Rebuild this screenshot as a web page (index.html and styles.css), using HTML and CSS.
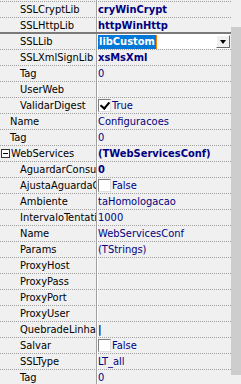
FILE: index.html
```html
<!DOCTYPE html>
<html lang="en">
<head>
    <meta charset="UTF-8">
    <title>Object Inspector</title>
    <link rel="stylesheet" href="styles.css">
</head>
<body>
    <div class="inspector">
        <div class="props">
            <div class="row"><div class="name lvl2">SSLCryptLib</div><div class="value bold">cryWinCrypt</div></div>
            <div class="row"><div class="name lvl2">SSLHttpLib</div><div class="value bold">httpWinHttp</div></div>
            <div class="row selected">
                <div class="name lvl2">SSLLib</div>
                <div class="value editor">
                    <span class="sel">libCustom</span><span class="caret"></span>
                    <span class="drop"><span class="arrow"></span></span>
                </div>
            </div>
            <div class="row"><div class="name lvl2">SSLXmlSignLib</div><div class="value bold">xsMsXml</div></div>
            <div class="row"><div class="name lvl2">Tag</div><div class="value">0</div></div>
            <div class="row"><div class="name lvl2">UserWeb</div><div class="value"></div></div>
            <div class="row"><div class="name lvl2">ValidarDigest</div><div class="value"><span class="check on"></span>True</div></div>
            <div class="row"><div class="name lvl1">Name</div><div class="value">Configuracoes</div></div>
            <div class="row"><div class="name lvl1">Tag</div><div class="value">0</div></div>
            <div class="row"><div class="name lvl1 group"><span class="toggle"></span>WebServices</div><div class="value bold">(TWebServicesConf)</div></div>
            <div class="row"><div class="name lvl2">AguardarConsultaRet</div><div class="value bold">0</div></div>
            <div class="row"><div class="name lvl2">AjustaAguardaConsultaRet</div><div class="value"><span class="check"></span>False</div></div>
            <div class="row"><div class="name lvl2">Ambiente</div><div class="value">taHomologacao</div></div>
            <div class="row"><div class="name lvl2">IntervaloTentativas</div><div class="value">1000</div></div>
            <div class="row"><div class="name lvl2">Name</div><div class="value">WebServicesConf</div></div>
            <div class="row"><div class="name lvl2">Params</div><div class="value">(TStrings)</div></div>
            <div class="row"><div class="name lvl2">ProxyHost</div><div class="value"></div></div>
            <div class="row"><div class="name lvl2">ProxyPass</div><div class="value"></div></div>
            <div class="row"><div class="name lvl2">ProxyPort</div><div class="value"></div></div>
            <div class="row"><div class="name lvl2">ProxyUser</div><div class="value"></div></div>
            <div class="row"><div class="name lvl2">QuebradeLinha</div><div class="value bold">|</div></div>
            <div class="row"><div class="name lvl2">Salvar</div><div class="value"><span class="check"></span>False</div></div>
            <div class="row"><div class="name lvl2">SSLType</div><div class="value">LT_all</div></div>
            <div class="row"><div class="name lvl2">Tag</div><div class="value">0</div></div>
        </div>
        <div class="scrollbar"><div class="thumb"></div></div>
    </div>
</body>
</html>
```

FILE: styles.css
```css
* {
    margin: 0;
    padding: 0;
    box-sizing: border-box;
}

body {
    font-family: "DejaVu Sans Condensed", "Liberation Sans", Arial, sans-serif;
    font-size: 11px;
    background-color: #f0f0f0;
    color: #000;
    overflow: hidden;
}

.inspector {
    display: flex;
    width: 241px;
    height: 384px;
}

.props {
    width: 231px;
    padding-top: 1px;
    background: linear-gradient(to right, transparent 96px, #a0a0a0 96px, #a0a0a0 97px, #ffffff 97px, #ffffff 98px, transparent 98px);
}

.row {
    display: flex;
    height: 16px;
    border-top: 1px dotted #a0a0a0;
    line-height: 15px;
}

.name {
    width: 98px;
    flex-shrink: 0;
    overflow: hidden;
    white-space: nowrap;
    border-right: 2px solid transparent;
}

.lvl1 {
    padding-left: 10px;
}

.lvl2 {
    padding-left: 20px;
}

.group {
    display: flex;
    align-items: center;
    padding-left: 1px;
}

.toggle {
    position: relative;
    width: 9px;
    height: 9px;
    border: 1px solid #333;
    background: #fff;
    margin-right: 1px;
}

.toggle::after {
    content: "";
    position: absolute;
    left: 1px;
    top: 3px;
    width: 5px;
    height: 1px;
    background: #000;
}

.value {
    flex: 1;
    padding-left: 0;
    color: #000080;
    overflow: hidden;
    white-space: nowrap;
    display: flex;
    align-items: center;
}

.bold {
    font-weight: bold;
}

.check {
    width: 13px;
    height: 13px;
    margin-right: 1px;
    background: #fff;
    border-top: 1px solid #808080;
    border-left: 1px solid #808080;
    border-right: 1px solid #e0e0e0;
    border-bottom: 1px solid #e0e0e0;
    position: relative;
}

.check.on::after {
    content: "";
    position: absolute;
    left: 3px;
    top: 0;
    width: 4px;
    height: 7px;
    border-right: 2px solid #000;
    border-bottom: 2px solid #000;
    transform: rotate(40deg);
}

.row.selected {
    margin-top: -1px;
    height: 17px;
    border-top: 2px solid #7a7a7a;
}

.editor {
    position: relative;
    background: #fff;
    margin-right: 1px;
    font-weight: bold;
}

.sel {
    background: #0078d7;
    color: #fff;
    line-height: 14px;
    padding: 0 1px;
}

.caret {
    width: 1px;
    height: 14px;
    background: #ff8000;
}

.drop {
    position: absolute;
    right: 0;
    top: 1px;
    width: 14px;
    height: 13px;
    background: #f0f0f0;
    border-top: 1px solid #fff;
    border-left: 1px solid #fff;
    border-right: 1px solid #696969;
    border-bottom: 1px solid #696969;
    display: flex;
    align-items: center;
    justify-content: center;
}

.arrow {
    width: 0;
    height: 0;
    border-left: 3px solid transparent;
    border-right: 3px solid transparent;
    border-top: 4px solid #000;
}

.scrollbar {
    width: 10px;
    padding-top: 27px;
    padding-bottom: 9px;
    background: #f0f0f0;
}

.thumb {
    height: 100%;
    background: #cdcdcd;
}
```
